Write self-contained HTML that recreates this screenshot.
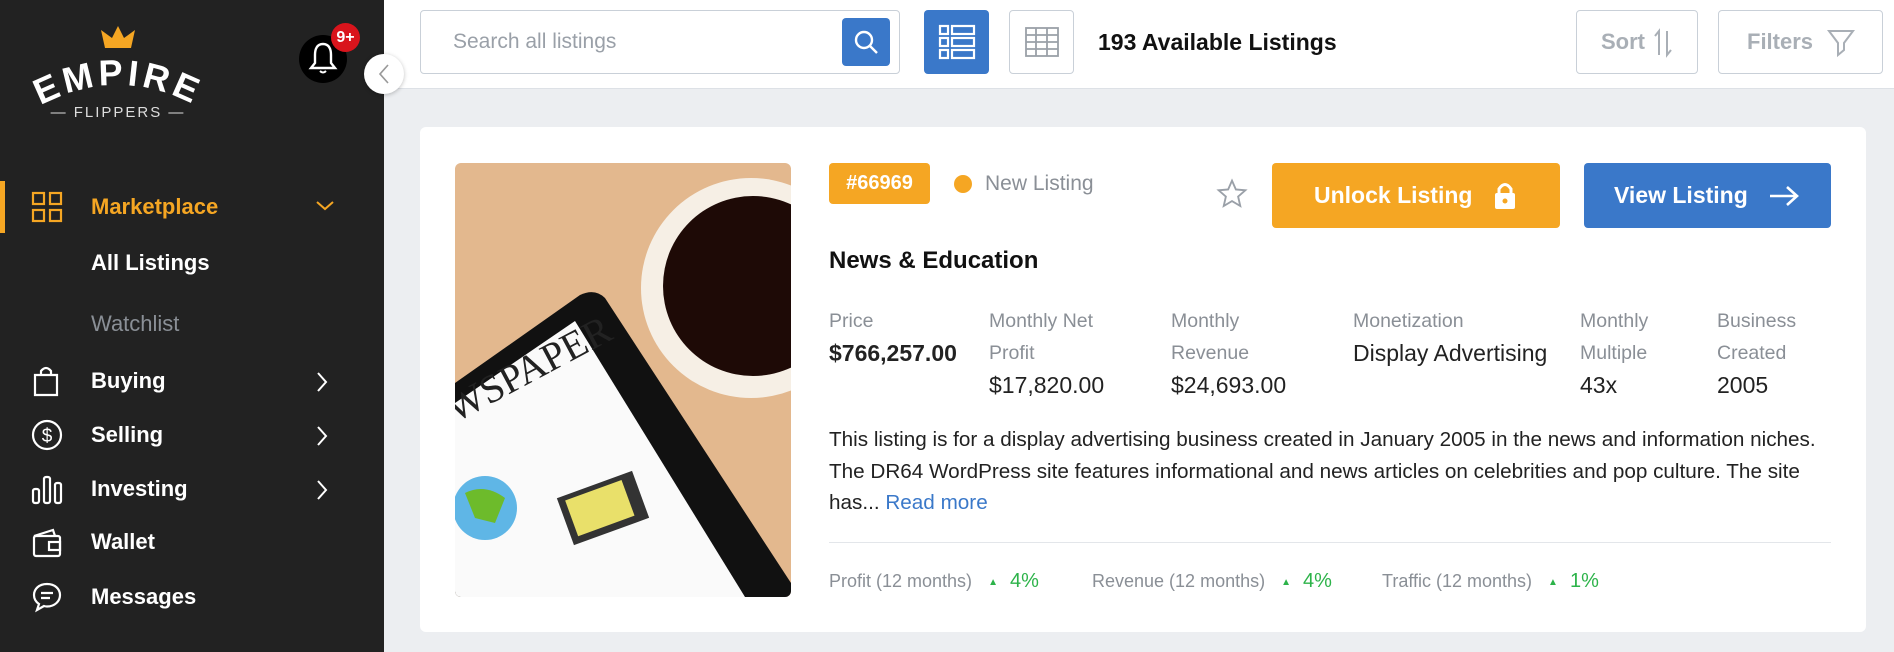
<!DOCTYPE html>
<html><head><meta charset="utf-8"><style>
*{box-sizing:border-box;margin:0;padding:0}
body{width:1894px;height:652px;overflow:hidden;background:#eceef1;font-family:"Liberation Sans",Arial,sans-serif;position:relative}
.abs{position:absolute}
.side{left:0;top:0;width:384px;height:652px;background:#222}
.nav{position:absolute;left:91px;color:#fff;font-size:22px;font-weight:bold;line-height:1}
.ico{position:absolute;left:31px}
.top{left:384px;top:0;width:1510px;height:89px;background:#fff;border-bottom:1px solid #dde1e6}
.btn{position:absolute;border:1px solid #c9d0d8;border-radius:4px;background:#fff}
.card{left:420px;top:127px;width:1446px;height:505px;background:#fff;border-radius:6px}
.lbl{position:absolute;color:#8a8f96;font-size:19.5px;line-height:32px}
.val{color:#222;font-size:23px}
.desc{left:829px;top:424px;font-size:20.7px;line-height:31.5px;color:#222;white-space:nowrap}
.ft{position:absolute;top:570px;font-size:18px;color:#8a8f96}
.ft b{color:#2db34a;font-weight:normal;font-size:20px;margin-left:12px}
.ft i{font-style:normal;font-size:10px;color:#2db34a;margin-left:16px;vertical-align:2px}
</style></head><body>
<div class="abs side">
  <svg class="abs" style="left:28px;top:22px" width="180" height="100" viewBox="0 0 180 100">
    <path d="M77 26 L73 8 L84 16 L90 4 L96 16 L107 8 L103 26 Z" fill="#f5a623"/>
    <defs><path id="arc" d="M8 86 Q90 40 172 86"/></defs>
    <text fill="#fff" font-family="Liberation Sans" font-weight="bold" font-size="36" letter-spacing="4"><textPath href="#arc" startOffset="50%" text-anchor="middle">EMPIRE</textPath></text>
    <text x="90" y="95" text-anchor="middle" fill="#ddd" font-family="Liberation Sans" font-size="15" letter-spacing="2">— FLIPPERS —</text>
  </svg>
  <div class="abs" style="left:299px;top:35px;width:48px;height:48px;border-radius:50%;background:#000"></div>
  <svg class="abs" style="left:307px;top:40px" width="32" height="36" viewBox="0 0 32 36"><path d="M16 4 C10 4 8 9 8 15 L8 23 L4 28 L28 28 L24 23 L24 15 C24 9 22 4 16 4Z" fill="none" stroke="#fff" stroke-width="2.4"/><path d="M13 31 Q16 34 19 31" stroke="#fff" stroke-width="2" fill="none"/></svg>
  <div class="abs" style="left:331px;top:23px;width:29px;height:29px;border-radius:50%;background:#d9141c;color:#fff;font-weight:bold;font-size:16px;text-align:center;line-height:29px">9+</div>
  <div class="abs" style="left:0;top:181px;width:5px;height:52px;background:#f5a623"></div>
  <svg class="ico" style="top:191px" width="32" height="32" viewBox="0 0 32 32" fill="none" stroke="#f5a623" stroke-width="2.2"><rect x="2" y="2" width="11" height="11"/><rect x="19" y="2" width="11" height="11"/><rect x="2" y="19" width="11" height="11"/><rect x="19" y="19" width="11" height="11"/></svg>
  <div class="nav" style="top:196px;color:#f5a623">Marketplace</div>
  <svg class="abs" style="left:315px;top:200px" width="20" height="12"><path d="M2 2 L10 9 L18 2" stroke="#f5a623" stroke-width="2" fill="none"/></svg>
  <div class="nav" style="top:252px">All Listings</div>
  <div class="nav" style="top:313px;color:#8a8f96;font-weight:normal">Watchlist</div>
  <svg class="ico" style="top:365px" width="30" height="32" viewBox="0 0 30 32" fill="none" stroke="#fff" stroke-width="2.2"><path d="M4 10 H26 L26 30 H4Z M10 10 V6 Q15 0 20 6 V10"/></svg>
  <div class="nav" style="top:370px">Buying</div>
  <svg class="ico" style="top:419px" width="32" height="32" viewBox="0 0 32 32" fill="none" stroke="#fff" stroke-width="2.2"><circle cx="16" cy="16" r="14"/><text x="16" y="23" text-anchor="middle" fill="#fff" stroke="none" font-size="19" font-family="Liberation Sans">$</text></svg>
  <div class="nav" style="top:424px">Selling</div>
  <svg class="ico" style="top:473px" width="32" height="32" viewBox="0 0 32 32" fill="none" stroke="#fff" stroke-width="2.2"><rect x="2" y="16" width="6" height="14" rx="2"/><rect x="13" y="4" width="6" height="26" rx="2"/><rect x="24" y="10" width="6" height="20" rx="2"/></svg>
  <div class="nav" style="top:478px">Investing</div>
  <svg class="ico" style="top:527px" width="32" height="32" viewBox="0 0 32 32" fill="none" stroke="#fff" stroke-width="2.2"><path d="M3 9 L22 3 L24 9"/><rect x="3" y="9" width="26" height="20" rx="2"/><rect x="18" y="15" width="11" height="8"/></svg>
  <div class="nav" style="top:531px">Wallet</div>
  <svg class="ico" style="top:581px" width="32" height="32" viewBox="0 0 32 32" fill="none" stroke="#fff" stroke-width="2.2"><path d="M16 3 C8 3 3 8 3 14 C3 18 5 21 8 23 L6 29 L13 25 Q14.5 25.5 16 25.5 C24 25.5 29 20 29 14 C29 8 24 3 16 3Z"/><path d="M10 12 H22 M10 17 H19"/></svg>
  <div class="nav" style="top:586px">Messages</div>
  <svg class="abs" style="left:315px;top:370px" width="14" height="24"><path d="M3 3 L11 12 L3 21" stroke="#fff" stroke-width="2" fill="none"/></svg>
  <svg class="abs" style="left:315px;top:424px" width="14" height="24"><path d="M3 3 L11 12 L3 21" stroke="#fff" stroke-width="2" fill="none"/></svg>
  <svg class="abs" style="left:315px;top:478px" width="14" height="24"><path d="M3 3 L11 12 L3 21" stroke="#fff" stroke-width="2" fill="none"/></svg>
</div>
<div class="abs top"></div>
<div class="abs" style="left:364px;top:54px;width:40px;height:40px;border-radius:50%;background:#fff;box-shadow:0 1px 4px rgba(0,0,0,.25)"></div>
<svg class="abs" style="left:377px;top:62px" width="14" height="24"><path d="M11 3 L3 12 L11 21" stroke="#999" stroke-width="1.6" fill="none"/></svg>
<div class="btn" style="left:420px;top:10px;width:480px;height:64px"></div>
<div class="abs" style="left:453px;top:30px;font-size:21px;color:#9aa0a8">Search all listings</div>
<div class="abs" style="left:842px;top:18px;width:48px;height:48px;border-radius:4px;background:#3a78c9"></div>
<svg class="abs" style="left:853px;top:29px" width="26" height="26" fill="none" stroke="#fff" stroke-width="2.4"><circle cx="11" cy="11" r="8"/><path d="M17 17 L24 24"/></svg>
<div class="abs" style="left:924px;top:10px;width:65px;height:64px;border-radius:4px;background:#3a78c9"></div>
<svg class="abs" style="left:938px;top:24px" width="38" height="36" fill="none" stroke="#fff" stroke-width="2.2"><rect x="2" y="2" width="8" height="8"/><rect x="14" y="2" width="22" height="8"/><rect x="2" y="14" width="8" height="8"/><rect x="14" y="14" width="22" height="8"/><rect x="2" y="26" width="8" height="8"/><rect x="14" y="26" width="22" height="8"/></svg>
<div class="btn" style="left:1009px;top:10px;width:65px;height:64px"></div>
<svg class="abs" style="left:1024px;top:26px" width="36" height="32" fill="none" stroke="#9aa0a8" stroke-width="1.8"><rect x="2" y="2" width="32" height="28"/><path d="M2 9 H34 M2 16 H34 M2 23 H34 M12 2 V30 M23 2 V30"/></svg>
<div class="abs" style="left:1098px;top:29px;font-size:23px;font-weight:bold;color:#111">193 Available Listings</div>
<div class="btn" style="left:1576px;top:10px;width:122px;height:64px"></div>
<div class="abs" style="left:1601px;top:29px;font-size:22px;font-weight:bold;color:#a9afb6">Sort</div>
<svg class="abs" style="left:1653px;top:27px" width="20" height="32" fill="none" stroke="#a9afb6" stroke-width="2"><path d="M6 28 V4 L2 9 M14 4 V28 L18 23"/></svg>
<div class="btn" style="left:1718px;top:10px;width:165px;height:64px"></div>
<div class="abs" style="left:1747px;top:29px;font-size:22px;font-weight:bold;color:#a9afb6">Filters</div>
<svg class="abs" style="left:1826px;top:28px" width="30" height="30" fill="none" stroke="#a9afb6" stroke-width="2"><path d="M3 3 H27 L18 15 V22 L12 27 V15 Z"/></svg>

<div class="abs card"></div>
<svg class="abs" style="left:455px;top:163px;border-radius:6px" width="336" height="434" viewBox="0 0 336 434">
  <rect width="336" height="434" fill="#e3b88e"/>
  <circle cx="296" cy="125" r="110" fill="#f6efe5"/>
  <circle cx="298" cy="123" r="90" fill="#1e0a06"/>
  <path d="M0 220 L125 132 Q140 125 150 135 L336 420 L336 434 L0 434Z" fill="#111"/>
  <path d="M0 240 L120 158 L290 434 L0 434Z" fill="#fafafa"/>
  <text x="0" y="260" transform="rotate(-28 0 260)" font-family="Liberation Serif" font-size="40" fill="#222">WSPAPER</text>
  <circle cx="30" cy="345" r="32" fill="#5fb6e6"/><path d="M10 330 Q30 320 50 335 L40 360 L20 355Z" fill="#6dbb2b"/>
  <rect x="108" y="320" width="80" height="50" transform="rotate(-20 148 345)" fill="#333"/>
  <rect x="115" y="325" width="60" height="38" transform="rotate(-20 148 345)" fill="#e9e06a"/>
</svg>
<div class="abs" style="left:829px;top:163px;width:101px;height:41px;border-radius:4px;background:#f5a623;color:#fff;font-weight:bold;font-size:20px;text-align:center;line-height:41px">#66969</div>
<div class="abs" style="left:954px;top:175px;width:18px;height:18px;border-radius:50%;background:#f5a623"></div>
<div class="abs" style="left:985px;top:172px;font-size:21px;color:#8a8f96">New Listing</div>
<svg class="abs" style="left:1216px;top:178px" width="32" height="32" viewBox="0 0 24 24" fill="none" stroke="#9aa0a8" stroke-width="1.4"><path d="M12 2 L14.9 8.6 L22 9.2 L16.6 13.9 L18.2 21 L12 17.3 L5.8 21 L7.4 13.9 L2 9.2 L9.1 8.6Z"/></svg>
<div class="abs" style="left:1272px;top:163px;width:288px;height:65px;border-radius:4px;background:#f5a623"></div>
<div class="abs" style="left:1314px;top:182px;font-size:23px;font-weight:bold;color:#fff">Unlock Listing</div>
<svg class="abs" style="left:1492px;top:180px" width="26" height="30" viewBox="0 0 26 30"><path d="M7 13 V9 Q13 0 19 9 V13" stroke="#fff" stroke-width="3" fill="none"/><rect x="3" y="13" width="20" height="16" rx="2" fill="#fff"/><circle cx="13" cy="21" r="2.5" fill="#f5a623"/></svg>
<div class="abs" style="left:1584px;top:163px;width:247px;height:65px;border-radius:4px;background:#3a78c9"></div>
<div class="abs" style="left:1614px;top:182px;font-size:23px;font-weight:bold;color:#fff">View Listing</div>
<svg class="abs" style="left:1768px;top:184px" width="32" height="24" fill="none" stroke="#fff" stroke-width="2.6"><path d="M2 12 H29 M19 3 L29 12 L19 21"/></svg>
<div class="abs" style="left:829px;top:247px;font-size:24px;font-weight:bold;color:#111">News &amp; Education</div>
<div class="lbl" style="left:829px;top:305px">Price<br><span class="val" style="font-weight:bold">$766,257.00</span></div>
<div class="lbl" style="left:989px;top:305px">Monthly Net<br>Profit<br><span class="val">$17,820.00</span></div>
<div class="lbl" style="left:1171px;top:305px">Monthly<br>Revenue<br><span class="val">$24,693.00</span></div>
<div class="lbl" style="left:1353px;top:305px">Monetization<br><span class="val">Display Advertising</span></div>
<div class="lbl" style="left:1580px;top:305px">Monthly<br>Multiple<br><span class="val">43x</span></div>
<div class="lbl" style="left:1717px;top:305px">Business<br>Created<br><span class="val">2005</span></div>
<div class="abs desc">This listing is for a display advertising business created in January 2005 in the news and information niches.<br>The DR64 WordPress site features informational and news articles on celebrities and pop culture. The site<br>has... <span style="color:#3a78c9">Read more</span></div>
<div class="abs" style="left:829px;top:542px;width:1002px;height:1px;background:#e3e6ea"></div>
<div class="ft" style="left:829px">Profit (12 months)<i>▲</i><b>4%</b></div>
<div class="ft" style="left:1092px">Revenue (12 months)<i>▲</i><b>4%</b></div>
<div class="ft" style="left:1382px">Traffic (12 months)<i>▲</i><b>1%</b></div>
</body></html>
